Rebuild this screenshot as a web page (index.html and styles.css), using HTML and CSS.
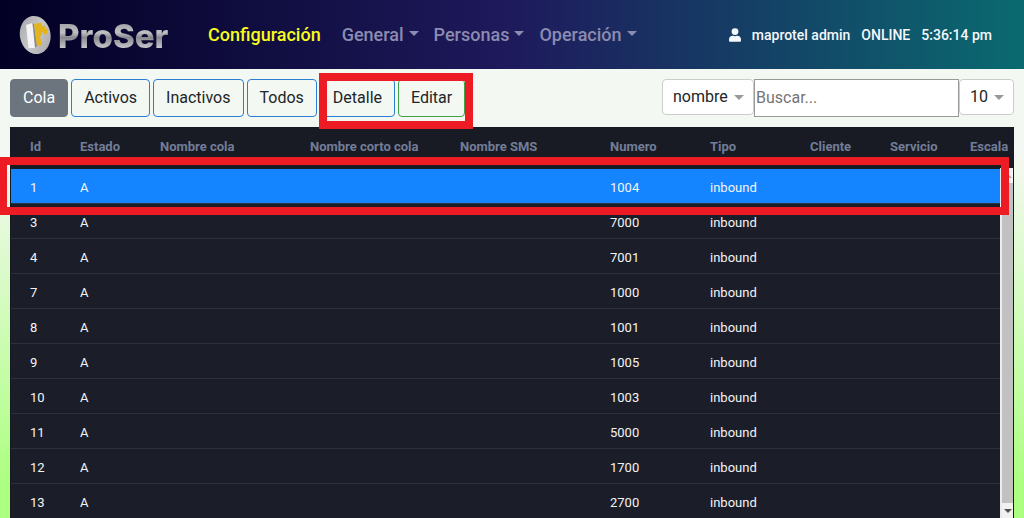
FILE: index.html
```html
<!DOCTYPE html>
<html lang="es">
<head>
<meta charset="utf-8">
<meta name="viewport" content="width=device-width, initial-scale=1">
<title>ProSer - Configuración</title>
<link rel="stylesheet" href="styles.css">
</head>
<body>
<header class="navbar">
  <a class="brand" href="#" aria-label="ProSer">
    <svg class="brand-mark" viewBox="0 0 34 40" aria-hidden="true">
      <defs>
        <linearGradient id="disc" x1="0" y1="0" x2="1" y2="1">
          <stop offset="0" stop-color="#a4a4a8"/>
          <stop offset="0.5" stop-color="#c8c8ca"/>
          <stop offset="1" stop-color="#a4a4a8"/>
        </linearGradient>
      </defs>
      <ellipse cx="17.200" cy="20" rx="15.300" ry="19.200" transform="rotate(-10 17.200 20)" fill="url(#disc)"/>
      <path d="M8 10 L14.500 8 L18.500 30 L17 33 L10.500 33 Z" fill="#f4f4f6"/>
      <path d="M14.500 8 L16 9 L19 31 L17 33 Z" fill="#88888c"/>
      <path d="M16 9 L23.500 7.500 L24 11 L26.500 10.500 L27.500 14 L29.500 14 L29.500 19 L25.500 19.500 L25 17 L23.500 17.500 L24 20.500 L22 21 L24 30 L19 31 Z" fill="#e4b41c"/>
    </svg>
    <span class="brand-name">ProSer</span>
  </a>
  <nav class="menu">
    <a class="menu-title" href="#">Configuración</a>
    <button class="menu-item caret" type="button">General</button>
    <button class="menu-item caret" type="button">Personas</button>
    <button class="menu-item caret" type="button">Operación</button>
  </nav>
  <div class="session">
    <svg class="user-icon" viewBox="0 0 448 512" aria-hidden="true"><path fill="currentColor" d="M224 256a128 128 0 1 0 0-256 128 128 0 0 0 0 256zm90 32h-17a174 174 0 0 1-146 0h-17C60 288 0 348 0 422v42c0 26 22 48 48 48h352c26 0 48-22 48-48v-42c0-74-60-134-134-134z"/></svg>
    <span>maprotel admin</span>
    <span>ONLINE</span>
    <span>5:36:14 pm</span>
  </div>
</header>
<main class="page">
  <div class="toolbar">
    <div class="actions">
      <button class="btn btn-current" type="button">Cola</button>
      <button class="btn" type="button">Activos</button>
      <button class="btn" type="button">Inactivos</button>
      <button class="btn" type="button">Todos</button>
      <div class="marked">
        <button class="btn" type="button">Detalle</button>
        <button class="btn btn-edit" type="button">Editar</button>
      </div>
    </div>
    <div class="filters">
      <span class="picker"><select class="select" aria-label="Campo de búsqueda"><option>nombre</option></select></span>
      <input class="search" type="text" placeholder="Buscar..." aria-label="Buscar">
      <span class="picker"><select class="select" aria-label="Filas por página"><option>10</option></select></span>
    </div>
  </div>
  <section class="panel">
    <div class="viewport">
      <table class="grid">
        <colgroup><col class="w50"><col class="w80"><col class="w150"><col class="w150"><col class="w150"><col class="w100"><col class="w100"><col class="w80"><col class="w80"><col class="w80"></colgroup>
        <thead><tr><th>Id</th><th>Estado</th><th>Nombre cola</th><th>Nombre corto cola</th><th>Nombre SMS</th><th>Numero</th><th>Tipo</th><th>Cliente</th><th>Servicio</th><th>Escala</th></tr></thead>
        <tbody>
          <tr class="selected"><td>1</td><td>A</td><td></td><td></td><td></td><td>1004</td><td>inbound</td><td></td><td></td><td></td></tr>
          <tr><td>3</td><td>A</td><td></td><td></td><td></td><td>7000</td><td>inbound</td><td></td><td></td><td></td></tr>
          <tr><td>4</td><td>A</td><td></td><td></td><td></td><td>7001</td><td>inbound</td><td></td><td></td><td></td></tr>
          <tr><td>7</td><td>A</td><td></td><td></td><td></td><td>1000</td><td>inbound</td><td></td><td></td><td></td></tr>
          <tr><td>8</td><td>A</td><td></td><td></td><td></td><td>1001</td><td>inbound</td><td></td><td></td><td></td></tr>
          <tr><td>9</td><td>A</td><td></td><td></td><td></td><td>1005</td><td>inbound</td><td></td><td></td><td></td></tr>
          <tr><td>10</td><td>A</td><td></td><td></td><td></td><td>1003</td><td>inbound</td><td></td><td></td><td></td></tr>
          <tr><td>11</td><td>A</td><td></td><td></td><td></td><td>5000</td><td>inbound</td><td></td><td></td><td></td></tr>
          <tr><td>12</td><td>A</td><td></td><td></td><td></td><td>1700</td><td>inbound</td><td></td><td></td><td></td></tr>
          <tr><td>13</td><td>A</td><td></td><td></td><td></td><td>2700</td><td>inbound</td><td></td><td></td><td></td></tr>
        </tbody>
      </table>
    </div>
    <div class="scrollbar" aria-hidden="true">
      <span class="scroll-end"></span>
      <span class="scroll-thumb"></span>
      <span class="scroll-end scroll-down"></span>
    </div>
    <div class="row-mark"></div>
  </section>
</main>
</body>
</html>
```
FILE: styles.css
```css
* { box-sizing: border-box; }

body {
  margin: 0;
  height: 100vh;
  display: flex;
  flex-direction: column;
  overflow: hidden;
  font: 16px/24px Roboto, sans-serif;
  color: #212529;
  background: linear-gradient(#f4f8f2 0, #f4f8f2 30%, #acff80 94%);
}

button, input, select { font: inherit; color: inherit; }

.navbar {
  flex: none;
  height: 69px;
  display: flex;
  align-items: center;
  padding: 0 32px 0 18px;
  background: linear-gradient(90deg, #020024 0%, #1e1a5c 50%, #0a6a70 100%);
}

.brand {
  width: 190px;
  display: flex;
  align-items: center;
  gap: 6px;
  text-decoration: none;
}

.brand-mark { width: 34px; height: 40px; }

.brand-name {
  padding-top: 2px;
  font: 800 33px/40px Inter, sans-serif;
  color: transparent;
  background: linear-gradient(#a0a0a4 20%, #c0c0c4 44%, #88888e 56%, #d0d0d4 85%);
  -webkit-background-clip: text;
  background-clip: text;
}

.menu {
  flex: 1;
  display: flex;
  align-items: center;
  gap: 15px;
  font-size: 18px;
  font-weight: 500;
}

.menu-title {
  margin-right: 6px;
  color: #f8fb1c;
  text-decoration: none;
}

.menu-item {
  padding: 0;
  border: 0;
  background: none;
  color: #8c8bb0;
}

.caret::after {
  content: "";
  display: inline-block;
  margin-left: 5px;
  vertical-align: 5px;
  border: 5px solid transparent;
  border-top-color: currentColor;
  border-bottom: 0;
}

.session {
  display: flex;
  align-items: center;
  gap: 11px;
  font-size: 14px;
  font-weight: 500;
  color: #f4f8fc;
}

.user-icon { width: 12px; height: 14px; }

.page {
  flex: 1;
  min-height: 0;
  display: flex;
  flex-direction: column;
  gap: 10px;
  padding: 10px 10px 0;
}

.toolbar {
  display: flex;
  justify-content: space-between;
}

.actions, .marked { display: flex; gap: 3px; }

.btn {
  height: 38px;
  padding: 0 12px;
  border: 1px solid #2a7fd4;
  border-radius: 4px;
  background: transparent;
}

.btn-current {
  border-color: #6c757d;
  background: #6c757d;
  color: #fff;
}

.btn-edit { border-color: #43a047; }

.marked { position: relative; }

.marked::after {
  content: "";
  position: absolute;
  z-index: 1;
  inset: -6px -8px -12px -1px;
  border: 8px solid #ed1c24;
  pointer-events: none;
}

.filters {
  display: flex;
  align-items: flex-start;
}

.picker {
  position: relative;
  display: flex;
}

.picker::after {
  content: "";
  position: absolute;
  right: 10px;
  top: 16px;
  border: 5px solid transparent;
  border-top-color: #999;
  border-bottom: 0;
  pointer-events: none;
}

.select {
  appearance: none;
  height: 36px;
  padding: 0 25px 0 10px;
  border: 1px solid #ccc;
  border-radius: 4px;
  background: #fff;
}

.search {
  width: 205px;
  height: 38px;
  padding: 0 1px 2px;
  border: 1px solid #999;
  border-radius: 0;
  background: #fff;
}

.search::placeholder { color: #757575; }

.panel {
  flex: 1;
  min-height: 0;
  position: relative;
  display: flex;
  border: 1px solid #151a22;
  border-bottom: 0;
  background: #1b1e28;
}

.viewport {
  flex: 1;
  min-width: 0;
  margin-right: -13px;
  overflow: hidden;
}

.grid {
  width: 1020px;
  table-layout: fixed;
  border-collapse: separate;
  border-spacing: 0;
  font-size: 13px;
  line-height: 20px;
  color: #f4f4f6;
}

.w50 { width: 50px; }
.w80 { width: 80px; }
.w100 { width: 100px; }
.w150 { width: 150px; }

.grid th, .grid td {
  padding: 0 0 0 19px;
  text-align: left;
  white-space: nowrap;
}

.grid th {
  height: 41px;
  padding-bottom: 4px;
  background: #191b24;
  color: #727d98;
  font-weight: 700;
}

.grid td {
  height: 35px;
  padding-top: 4px;
  border-bottom: 1px solid #2a333d;
}

.selected td { background: #1484ff; }

.scrollbar {
  position: relative;
  width: 13px;
  margin-top: 40px;
  display: flex;
  flex-direction: column;
  border-left: 2px solid #ececef;
  background: #f1f1f1;
}

.scroll-end {
  height: 15px;
  display: grid;
  place-items: center;
}

.scroll-thumb { flex: 1; background: #c1c1c1; }

.scroll-end::after {
  content: "";
  border: 4px solid transparent;
  border-bottom-color: #a3a3a3;
  border-top: 0;
}

.scroll-down::after {
  border-top: 4px solid #505050;
  border-bottom: 0;
}

.row-mark {
  position: absolute;
  inset: 29px 4px auto -12px;
  height: 58px;
  border: 8px solid #ed1c24;
  pointer-events: none;
}
```
